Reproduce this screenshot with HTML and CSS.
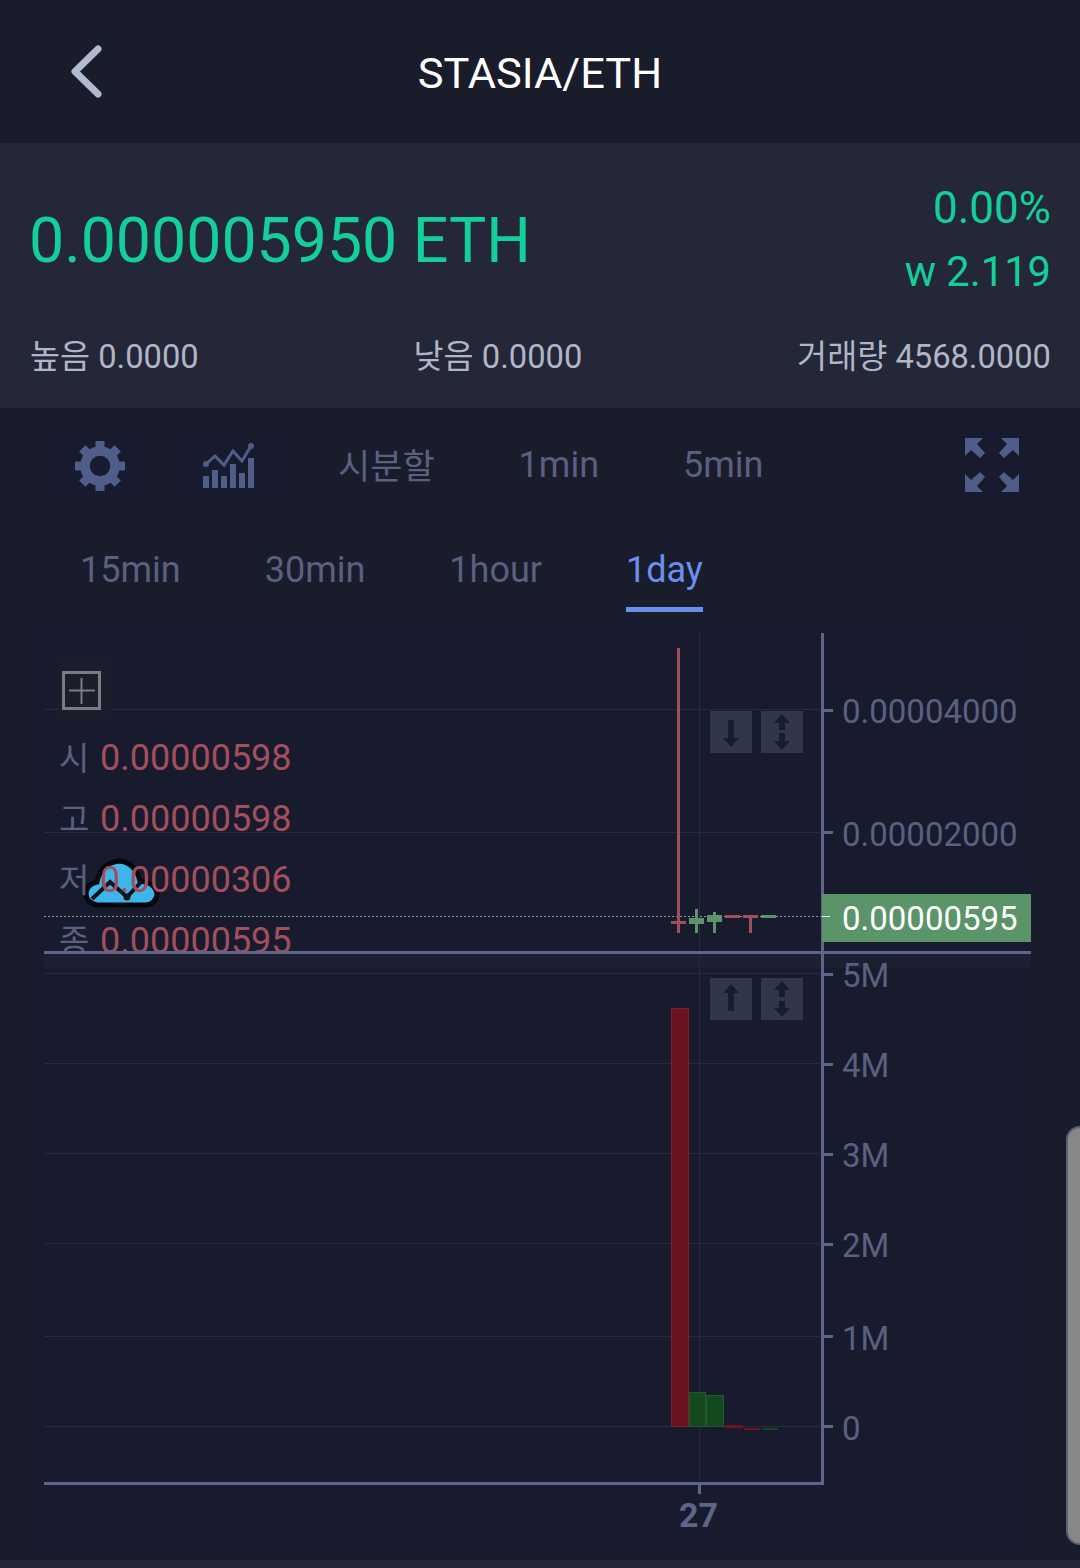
FILE: index.html
```html
<!DOCTYPE html>
<html lang="ko">
<head>
    <meta charset="UTF-8"/>
    <title>STASIA/ETH</title>
    <link rel="stylesheet" href="styles.css">
</head>
<body>
<div class="page">
    <!--ヘッダー-->
    <header class="header">
        <svg class="header__back" viewBox="0 0 36 60" width="36" height="60">
            <path d="M29 5 L6 27.5 L29 50" fill="none" stroke="#b0bbd0" stroke-width="7" stroke-linecap="round" stroke-linejoin="round"/>
        </svg>
        <h1 class="header__title">STASIA/ETH</h1>
    </header>

    <!--価格サマリー-->
    <section class="summary">
        <div class="summary__top">
            <div class="summary__price">0.000005950 ETH</div>
            <div class="summary__change">
                <div class="summary__percent">0.00%</div>
                <div>w 2.119</div>
            </div>
        </div>
        <div class="summary__stats">
            <span>높음 0.0000</span>
            <span>낮음 0.0000</span>
            <span>거래량 4568.0000</span>
        </div>
    </section>

    <main class="main">
        <!--ツールバー-->
        <div class="toolbar">
            <button class="tool tool__gear">
                <svg viewBox="0 0 52 52" width="52" height="52">
                    <g fill="#4f5d8a" transform="translate(26 26)">
                        <rect x="-4.5" y="-25" width="9" height="50"/>
                        <rect x="-4.5" y="-25" width="9" height="50" transform="rotate(45)"/>
                        <rect x="-4.5" y="-25" width="9" height="50" transform="rotate(90)"/>
                        <rect x="-4.5" y="-25" width="9" height="50" transform="rotate(135)"/>
                    </g>
                    <circle cx="26" cy="26" r="15" fill="none" stroke="#4f5d8a" stroke-width="9.5"/>
                    <circle cx="26" cy="26" r="10.2" fill="#181b2e"/>
                </svg>
            </button>
            <button class="tool tool__indicator">
                <svg viewBox="203 444 52 46" width="52" height="46">
                    <g fill="#4f5d8a">
                        <rect x="203" y="477" width="6" height="12"/>
                        <rect x="212" y="471" width="6" height="18"/>
                        <rect x="221" y="477" width="6" height="12"/>
                        <rect x="230" y="465" width="6" height="24"/>
                        <rect x="239" y="474" width="6" height="15"/>
                        <rect x="248" y="459" width="6" height="30"/>
                        <circle cx="206" cy="465" r="3"/>
                        <circle cx="251" cy="447" r="3"/>
                    </g>
                    <path d="M206 465 L215 457 L224 466 L233 452 L242 462 L251 447" fill="none" stroke="#4f5d8a" stroke-width="3"/>
                </svg>
            </button>
            <span class="tab tab__first">시분할</span>
            <span class="tab">1min</span>
            <span class="tab">5min</span>
            <button class="tool tool__expand">
                <svg viewBox="965 438 54 54" width="54" height="54">
                    <g fill="#4f5d8a">
                        <path d="M965 438 H983 L977 444 L985 453 L980 458 L971 450 L965 456 Z"/>
                        <path d="M1019 438 H1001 L1007 444 L999 453 L1004 458 L1013 450 L1019 456 Z"/>
                        <path d="M965 492 H983 L977 486 L985 477 L980 472 L971 480 L965 474 Z"/>
                        <path d="M1019 492 H1001 L1007 486 L999 477 L1004 472 L1013 480 L1019 474 Z"/>
                    </g>
                </svg>
            </button>
        </div>
        <div class="tabs">
            <span class="tab">15min</span>
            <span class="tab">30min</span>
            <span class="tab">1hour</span>
            <span class="tab tab__active"><span>1day</span></span>
        </div>

        <!--チャート-->
        <div class="chart">
            <svg class="chart__canvas" viewBox="30 620 1005 940" width="1005" height="940">
                <rect x="44" y="954" width="987" height="14" fill="#1d2033"/>

                <!-- grid -->
                <g stroke="#262b42" stroke-width="1">
                    <path d="M44 709.5 H820 M44 832.5 H820 M44 973.5 H820 M44 1063.5 H820 M44 1153.5 H820 M44 1243.5 H820 M44 1336.5 H820 M44 1426.5 H820"/>
                    <path d="M699.5 634 V950 M699.5 956 V1478"/>
                </g>

                <!-- crosshair toggle -->
                <rect x="58" y="658" width="54" height="64" fill="#1a1d2c"/>
                <rect x="63.5" y="672.5" width="36" height="36" fill="none" stroke="#7b7c82" stroke-width="3"/>
                <path d="M81.5 678 V704 M69 690.5 H95" stroke="#7b7c82" stroke-width="2"/>

                <!-- watermark -->
                <path d="M97 905 Q86 903 86 893 Q87 884 97 882 Q101 863 119 861 Q135 862 140 881 Q156 883 157 894 Q156 904 146 905 Z" fill="#3cb5ea" stroke="#05070d" stroke-width="5"/>
                <path d="M92 899 L110 882 L127 897 L142 881" fill="none" stroke="#10121c" stroke-width="4"/>
                <circle cx="127" cy="897" r="3.5" fill="#10121c"/>

                <!-- last price line -->
                <path d="M44 916.5 H822" stroke="#7f9c8c" stroke-width="1" stroke-dasharray="2 2"/>

                <!-- candles -->
                <g fill="#a24f5b">
                    <rect x="677" y="648" width="3" height="285"/>
                    <rect x="671" y="921" width="15" height="3"/>
                    <rect x="725" y="915" width="15" height="3"/>
                    <rect x="743" y="915" width="15" height="3"/>
                    <rect x="749" y="915" width="3" height="18"/>
                </g>
                <g fill="#5a9468">
                    <rect x="695" y="909" width="3" height="24"/>
                    <rect x="689" y="918" width="15" height="6"/>
                    <rect x="713" y="912" width="3" height="21"/>
                    <rect x="707" y="915" width="15" height="7"/>
                    <rect x="761" y="915" width="15" height="3"/>
                </g>

                <!-- volume -->
                <rect x="671.5" y="1008.5" width="17" height="418" fill="#6b1420" stroke="#78202c"/>
                <rect x="689.5" y="1392.5" width="16" height="34" fill="#12491f" stroke="#1d5a2c"/>
                <rect x="706.5" y="1395.5" width="17" height="31" fill="#12491f" stroke="#1d5a2c"/>
                <rect x="725" y="1425" width="18" height="3" fill="#6e1420"/>
                <rect x="744" y="1428" width="16" height="2" fill="#6e1420"/>
                <rect x="763" y="1428" width="15" height="2" fill="#12491f"/>

                <!-- axes -->
                <g fill="#5f6488">
                    <rect x="821" y="633" width="3" height="852"/>
                    <rect x="44" y="951" width="987" height="3"/>
                    <rect x="44" y="1482" width="780" height="3"/>
                    <rect x="824" y="709" width="9" height="3"/>
                    <rect x="824" y="831" width="9" height="3"/>
                    <rect x="824" y="973" width="9" height="3"/>
                    <rect x="824" y="1063" width="9" height="3"/>
                    <rect x="824" y="1153" width="9" height="3"/>
                    <rect x="824" y="1243" width="9" height="3"/>
                    <rect x="824" y="1335" width="9" height="3"/>
                    <rect x="824" y="1425" width="9" height="3"/>
                    <rect x="698" y="1485" width="3" height="9"/>
                </g>

                <!-- last price label -->
                <rect x="822" y="894" width="209" height="48" fill="#5a9468"/>
                <rect x="822" y="916" width="8" height="1" fill="#e8efe9"/>

                <!-- scale buttons -->
                <g fill="#32364a">
                    <rect x="710" y="711" width="42" height="42"/>
                    <rect x="761" y="711" width="42" height="42"/>
                    <rect x="710" y="978" width="42" height="42"/>
                    <rect x="761" y="978" width="42" height="42"/>
                </g>
                <g fill="#191c2e">
                    <path d="M728 720 H734 V738 H739 L731 747 L723 738 H728 Z"/>
                    <path d="M782 714 L790 723 H785 V730 H779 V723 H774 Z M779 733 H785 V741 H790 L782 750 L774 741 H779 Z"/>
                    <path d="M731 984 L739 993 H734 V1011 H728 V993 H723 Z"/>
                    <path d="M782 981 L790 990 H785 V997 H779 V990 H774 Z M779 1001 H785 V1008 H790 L782 1017 L774 1008 H779 Z"/>
                </g>

                <!-- axis labels -->
                <g class="chart__axis">
                    <text x="842" y="723">0.00004000</text>
                    <text x="842" y="846">0.00002000</text>
                    <text x="842" y="987">5M</text>
                    <text x="842" y="1077">4M</text>
                    <text x="842" y="1167">3M</text>
                    <text x="842" y="1257">2M</text>
                    <text x="842" y="1350">1M</text>
                    <text x="842" y="1440">0</text>
                </g>
                <text class="chart__last" x="842" y="930">0.00000595</text>
                <text class="chart__date" x="679" y="1527">27</text>
            </svg>

            <!--OHLC-->
            <div class="ohlc">
                <div class="ohlc__row"><span class="ohlc__key">시</span><span>0.00000598</span></div>
                <div class="ohlc__row"><span class="ohlc__key">고</span><span>0.00000598</span></div>
                <div class="ohlc__row"><span class="ohlc__key">저</span><span>0.00000306</span></div>
                <div class="ohlc__row"><span class="ohlc__key">종</span><span>0.00000595</span></div>
            </div>
        </div>
    </main>
    <div class="footer-strip"></div>

    <div class="scroll-thumb"></div>
</div>
</body>
</html>
```

FILE: styles.css
```css
* {
    box-sizing: border-box;
}

html,
body {
    margin: 0;
    padding: 0;
    background: #191c2b;
}

body {
    font-family: Roboto, "Noto Sans CJK KR", sans-serif;
}

.page {
    position: relative;
    width: 1080px;
    height: 1568px;
    overflow: hidden;
}

/* header */
.header {
    position: relative;
    height: 143px;
    padding-top: 4px;
    display: flex;
    align-items: center;
    justify-content: center;
    background: #191c2b;
}

.header__back {
    position: absolute;
    left: 69px;
    top: 44px;
}

.header__title {
    margin: 0;
    font-size: 43.4px;
    font-weight: 400;
    color: #ffffff;
}

/* summary */
.summary {
    height: 265px;
    padding: 33px 29px 0 29px;
    background: #232738;
}

.summary__top {
    display: flex;
    justify-content: space-between;
    align-items: center;
    height: 128px;
}

.summary__price {
    font-size: 62.6px;
    color: #13cf9a;
}

.summary__change {
    font-size: 41.7px;
    line-height: 64px;
    text-align: right;
    color: #13cf9a;
}

.summary__percent {
    font-size: 44px;
}

.summary__stats {
    display: flex;
    justify-content: space-between;
    margin: 32px 0 0 1px;
    font-size: 32.7px;
    line-height: 42px;
    color: #b0b6c6;
}

/* toolbar */
.main {
    height: 1152px;
    background: #191c2b;
}

.toolbar {
    display: flex;
    align-items: center;
    height: 83px;
    padding-left: 44px;
    padding-right: 45px;
    position: relative;
    top: 14px;
}

.tool {
    display: flex;
    align-items: center;
    justify-content: center;
    height: 83px;
    padding: 4px 0 0;
    border: 0;
    background: #181b2e;
}

.tool__gear {
    width: 111px;
    margin-right: 13px;
}

.tool__indicator {
    width: 120px;
    margin-right: 8px;
    padding-left: 2px;
}

.tool__expand {
    width: 87px;
    margin-left: auto;
    padding-top: 2px;
}

.tab {
    padding: 2px 42px 0;
    font-size: 36px;
    color: #5b6080;
}

.tab__first {
    padding-top: 0;
    font-size: 35px;
}

.tabs {
    display: flex;
    align-items: center;
    height: 84px;
    padding-left: 38px;
    position: relative;
    top: 36px;
}

.tab__active span {
    display: inline-block;
    padding: 0 0 16px;
    margin-bottom: -21px;
    color: #6a8fef;
    border-bottom: 5px solid #6a8fef;
}

/* chart */
.chart {
    position: relative;
    width: 1005px;
    height: 940px;
    margin: 45px 0 0 30px;
    background: #181b2e;
    overflow: hidden;
}

.chart__canvas {
    display: block;
}

.chart__axis text {
    font-size: 33px;
    fill: #5b6080;
}

.chart__last {
    font-size: 33px;
    fill: #ffffff;
}

.chart__date {
    font-size: 34px;
    font-weight: 700;
    fill: #5f6488;
}

.ohlc {
    position: absolute;
    left: 29px;
    top: 108px;
    height: 223px;
    overflow: hidden;
    font-size: 36px;
    line-height: 61px;
    color: #a34f5c;
}

.ohlc__row {
    display: flex;
    gap: 8px;
}

.ohlc__key {
    width: 33px;
    font-size: 33px;
    color: #5b6080;
}

.footer-strip {
    height: 8px;
    background: #232738;
}

.scroll-thumb {
    position: absolute;
    right: 0;
    top: 1126px;
    width: 14px;
    height: 419px;
    background: #888888;
    border: solid #5f6170;
    border-width: 2px 0 2px 2px;
    border-radius: 14px 0 0 14px;
}
```
